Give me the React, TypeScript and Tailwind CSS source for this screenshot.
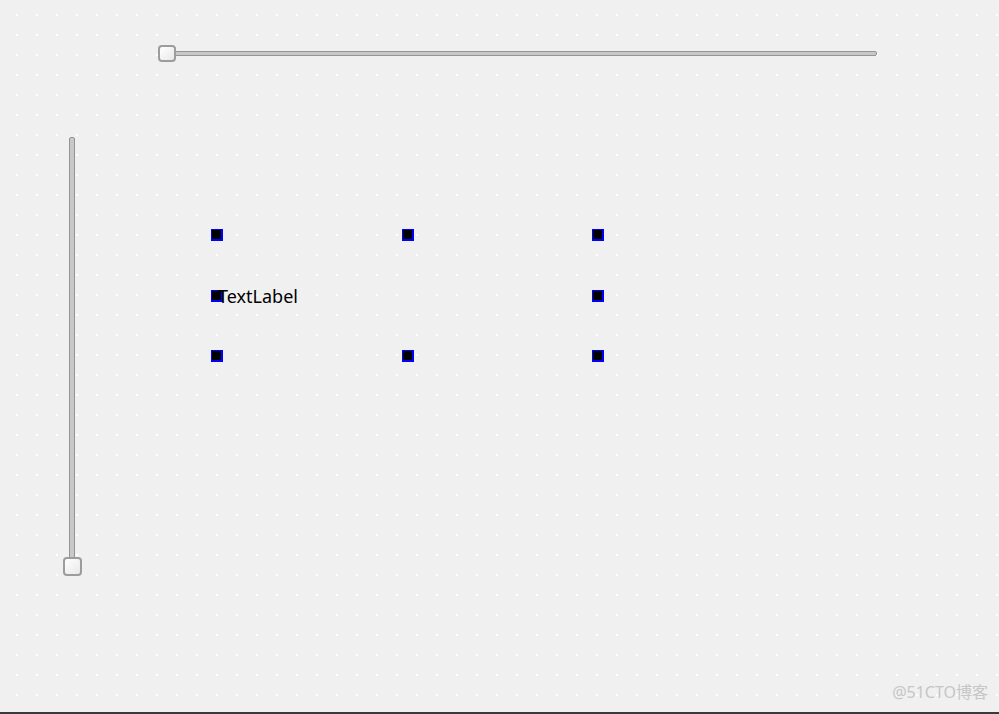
import React from 'react'

// selection handle drawn by the designer around the picked widget
const Grip = () => (
  <div className="w-[12px] h-[12px] bg-[#0000ff] pl-px pt-px">
    <div className="w-[9px] h-[9px] bg-black" />
  </div>
)

const SliderHandle = ({ className }: { className: string }) => (
  <div
    className={`absolute rounded-[4px] border-2 border-[#9c9c9c] bg-gradient-to-br from-white to-[#e8e8e8] ${className}`}
  />
)

const DotGrid = () => (
  <svg className="absolute inset-0" width="999" height="714">
    <defs>
      <pattern id="dots" x="16" y="14" width="20" height="20" patternUnits="userSpaceOnUse">
        <rect width="2" height="2" fill="#ffffff" />
      </pattern>
    </defs>
    <rect width="999" height="714" fill="url(#dots)" />
  </svg>
)

export default function App() {
  return (
    <div
      className="relative w-[999px] h-[714px] overflow-hidden bg-[#f0f0f0] border-b-2 border-[#3a3a3a]"
      style={{ fontFamily: '"Noto Sans", "Liberation Sans", "Noto Sans CJK SC", sans-serif' }}
    >
      <DotGrid />

      <div className="relative flex flex-col">
        {/* horizontal slider */}
        <div className="ml-[158px] mt-[45px] relative w-[719px] h-[17px]">
          <div className="absolute left-[9px] right-0 top-[6px] h-[5px] rounded-[2px] border border-[#959595] bg-[#c8c8c8]" />
          <SliderHandle className="left-0 top-0 w-[18px] h-[17px]" />
        </div>

        <div className="flex mt-[75px]">
          {/* vertical slider */}
          <div className="ml-[63px] relative w-[19px] h-[439px]">
            <div className="absolute top-0 bottom-[9px] left-[6px] w-[6px] rounded-[2px] border border-[#959595] bg-[#c8c8c8]" />
            <SliderHandle className="left-0 bottom-0 w-[19px] h-[19px]" />
          </div>

          {/* selected label */}
          <div className="ml-[129px] mt-[92px] w-[393px] h-[133px] flex flex-col justify-between">
            <div className="flex justify-between">
              <Grip />
              <Grip />
              <Grip />
            </div>
            <div className="flex justify-between items-center">
              <div className="flex items-center">
                <Grip />
                <span className="-ml-[5px] text-[18px] leading-none text-black">TextLabel</span>
              </div>
              <Grip />
            </div>
            <div className="flex justify-between">
              <Grip />
              <Grip />
              <Grip />
            </div>
          </div>
        </div>
      </div>

      <div className="absolute right-[11px] bottom-[8px] text-[16px] text-[#c6c6c6]">@51CTO博客</div>
    </div>
  )
}
